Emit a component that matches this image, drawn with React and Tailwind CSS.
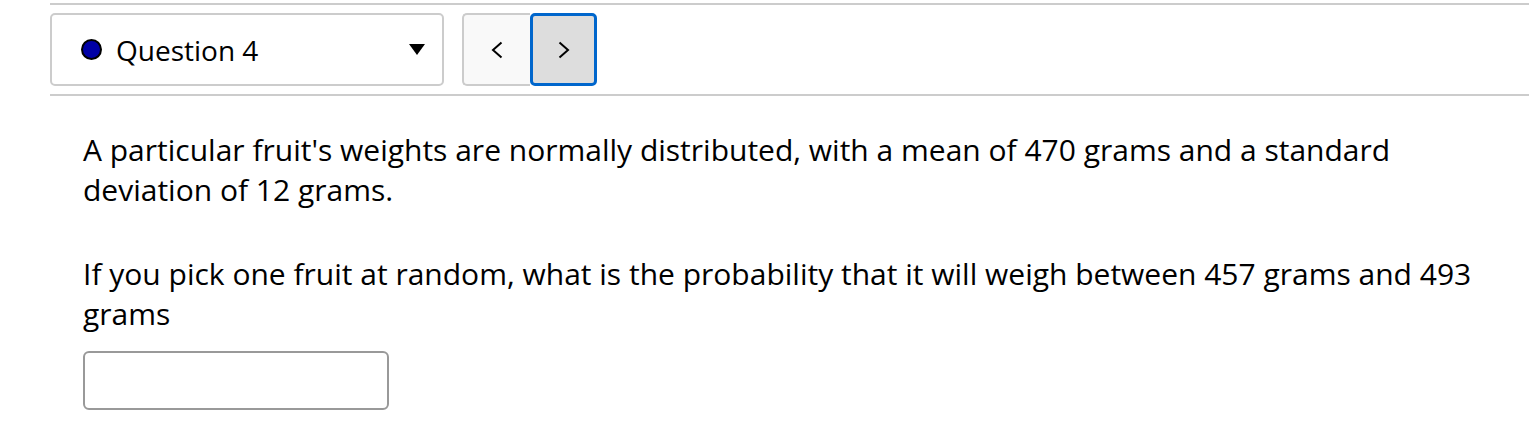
export default function App() {
  return (
    <div className="w-[1529px] h-[436px] bg-white pl-[50px] overflow-hidden" style={{ fontFamily: '"Open Sans", sans-serif' }}>
      <div className="mt-[3px] h-[2px] bg-[#cccccc]" />
      <div className="flex items-center mt-[8px] h-[73px]">
        <div className="w-[394px] h-full border-2 border-[#cccccc] rounded-[5px] flex items-center pl-[29px] pr-[17px]">
          <span className="w-[21px] h-[21px] rounded-full border-2 border-black bg-[#0000a6] shrink-0" />
          <span className="ml-[14px] text-[28px] text-black flex-1 leading-none">Question 4</span>
          <svg width="16" height="11" viewBox="0 0 16 11"><polygon points="0,0 16,0 8,11" fill="#000" /></svg>
        </div>
        <div className="flex ml-[18px] h-full">
          <div className="w-[68px] h-full bg-[#f9f9f9] border-2 border-r-0 border-[#cccccc] rounded-l-[5px] flex items-center justify-center">
            <svg width="12" height="18" viewBox="0 0 12 18"><polyline points="10.5,1.5 2,9 10.5,16.5" fill="none" stroke="#000" strokeWidth="2" /></svg>
          </div>
          <div className="w-[67px] h-full bg-[#dddddd] border-[3px] border-[#0066cc] rounded-[5px] flex items-center justify-center">
            <svg width="12" height="18" viewBox="0 0 12 18"><polyline points="1.5,1.5 10,9 1.5,16.5" fill="none" stroke="#000" strokeWidth="2" /></svg>
          </div>
        </div>
      </div>
      <div className="mt-[8px] h-[2px] bg-[#cccccc]" />
      <div className="pl-[33px] pt-[34px] text-[30px] leading-[40px] text-black">
        <p className="w-[1400px]">A particular fruit's weights are normally distributed, with a mean of 470 grams and a standard deviation of 12 grams.</p>
        <p className="mt-[44px] w-[1400px]">If you pick one fruit at random, what is the probability that it will weigh between 457 grams and 493 grams</p>
        <div className="mt-[17px] w-[306px] h-[59px] border-2 border-[#999999] rounded-[6px]" />
      </div>
    </div>
  );
}
